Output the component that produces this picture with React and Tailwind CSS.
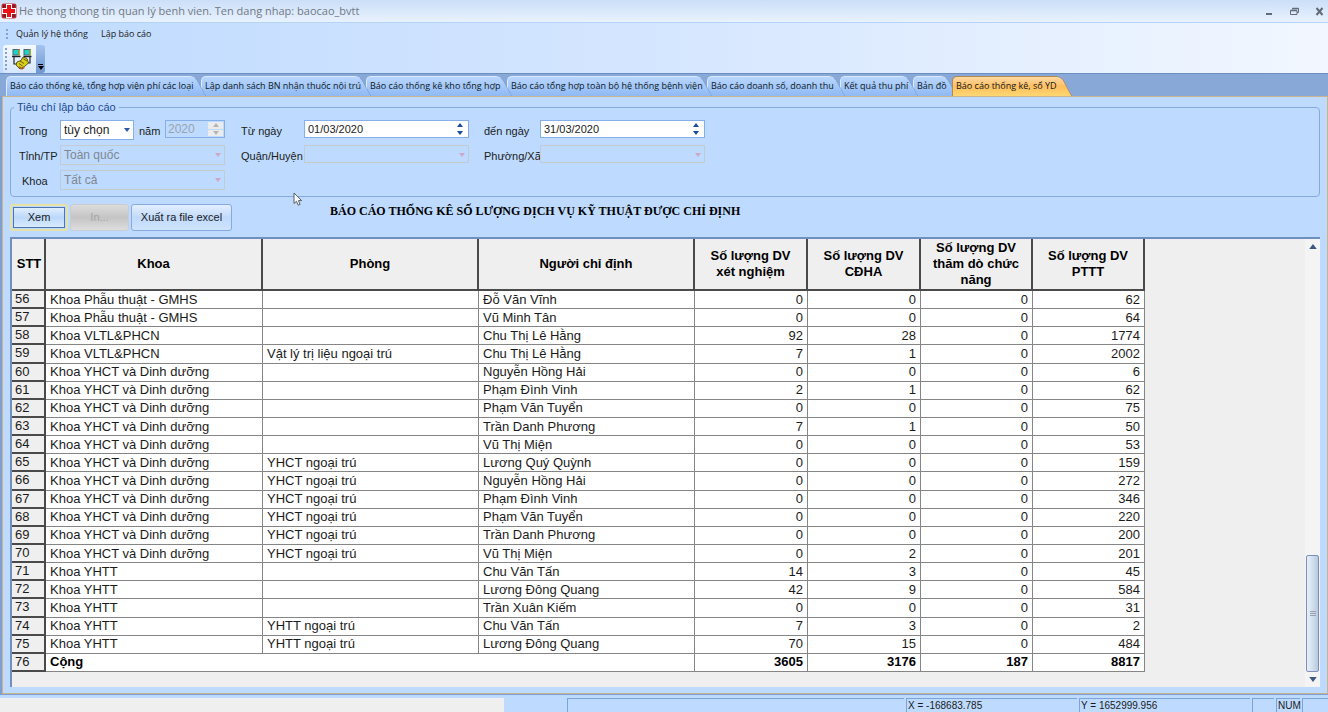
import { useState } from "react";

const TABS = [
  { label: "Báo cáo thống kê, tổng hợp viện phí các loại", width: "w-[195px]" },
  { label: "Lập danh sách BN nhận thuốc nội trú", width: "w-[165px]" },
  { label: "Báo cáo thống kê kho tổng hợp", width: "w-[141px]" },
  { label: "Báo cáo tổng hợp toàn bộ hệ thống bệnh viện", width: "w-[200px]" },
  { label: "Báo cáo doanh số, doanh thu", width: "w-[133px]" },
  { label: "Kết quả thu phí", width: "w-[73px]" },
  { label: "Bản đồ", width: "w-[39px]" },
  { label: "Báo cáo thống kê, sổ YD", width: "w-[115px]" },
];

const YHCT = "Khoa YHCT và Dinh dưỡng";
const ROWS = [
  [56, "Khoa Phẫu thuật - GMHS", "", "Đỗ Văn Vĩnh", 0, 0, 0, 62],
  [57, "Khoa Phẫu thuật - GMHS", "", "Vũ Minh Tân", 0, 0, 0, 64],
  [58, "Khoa VLTL&PHCN", "", "Chu Thị Lê Hằng", 92, 28, 0, 1774],
  [59, "Khoa VLTL&PHCN", "Vật lý trị liệu ngoại trú", "Chu Thị Lê Hằng", 7, 1, 0, 2002],
  [60, YHCT, "", "Nguyễn Hồng Hải", 0, 0, 0, 6],
  [61, YHCT, "", "Phạm Đình Vinh", 2, 1, 0, 62],
  [62, YHCT, "", "Phạm Văn Tuyển", 0, 0, 0, 75],
  [63, YHCT, "", "Trần Danh Phương", 7, 1, 0, 50],
  [64, YHCT, "", "Vũ Thị Miện", 0, 0, 0, 53],
  [65, YHCT, "YHCT ngoại trú", "Lương Quý Quỳnh", 0, 0, 0, 159],
  [66, YHCT, "YHCT ngoại trú", "Nguyễn Hồng Hải", 0, 0, 0, 272],
  [67, YHCT, "YHCT ngoại trú", "Phạm Đình Vinh", 0, 0, 0, 346],
  [68, YHCT, "YHCT ngoại trú", "Phạm Văn Tuyển", 0, 0, 0, 220],
  [69, YHCT, "YHCT ngoại trú", "Trần Danh Phương", 0, 0, 0, 200],
  [70, YHCT, "YHCT ngoại trú", "Vũ Thị Miện", 0, 2, 0, 201],
  [71, "Khoa YHTT", "", "Chu Văn Tấn", 14, 3, 0, 45],
  [72, "Khoa YHTT", "", "Lương Đông Quang", 42, 9, 0, 584],
  [73, "Khoa YHTT", "", "Trần Xuân Kiếm", 0, 0, 0, 31],
  [74, "Khoa YHTT", "YHTT ngoại trú", "Chu Văn Tấn", 7, 3, 0, 2],
  [75, "Khoa YHTT", "YHTT ngoại trú", "Lương Đông Quang", 70, 15, 0, 484],
];

const HEADERS = [
  "STT",
  "Khoa",
  "Phòng",
  "Người chỉ định",
  "Số lượng DV xét nghiệm",
  "Số lượng DV CĐHA",
  "Số lượng DV thăm dò chức năng",
  "Số lượng DV PTTT",
];

function AppIcon() {
  return (
    <svg width="16" height="16" viewBox="0 0 16 16" className="shrink-0" aria-hidden="true">
      <rect x=".5" y=".5" width="15" height="15" rx="2" fill="#d23a3f" />
      <path d="M1.500 1.500h4v4h-4zM10.500 1.500h4v4h-4zM1.500 10.500h4v4h-4zM10.500 10.500h4v4h-4z" fill="#8d1a20" />
      <path d="M5 1h6v4h4v6h-4v4H5v-4H1V5h4z" fill="#fff" />
      <path d="M6 2h4v4h4v4h-4v4H6v-4H2V6h4z" fill="#f01018" />
    </svg>
  );
}

function NetworkIcon() {
  return (
    <svg width="22" height="22" viewBox="0 0 22 22" aria-hidden="true">
      <path d="M3 8.500v7.500h4M19 8.500v6.500h-3" fill="none" stroke="#20262e" strokeWidth="1.200" />
      <rect x="1.500" y="1" width="7.500" height="6.500" fill="#55636b" />
      <rect x="2.500" y="2" width="4.500" height="4.500" fill="#19d3cf" />
      <rect x="7.500" y="1.500" width="1.200" height="6.500" fill="#c6cf28" />
      <path d="M1 8.500h8.500" stroke="#1b1f25" strokeWidth="1.400" />
      <rect x="12.500" y="1" width="7.500" height="6.500" fill="#55636b" />
      <rect x="13.500" y="2" width="4.500" height="4.500" fill="#19d3cf" />
      <rect x="18.500" y="1.500" width="1.200" height="6.500" fill="#c6cf28" />
      <path d="M12.500 8.500h8" stroke="#1b1f25" strokeWidth="1.400" />
      <path d="M6 14l4-1.500 2-3.500 4 1.500 1.500 4.500-4 3.500-4.500 2.500-4-4z" fill="#d9cf16" stroke="#3b3708" strokeWidth=".8" />
      <path d="M9 13l4 2.500M8 15.500l3.500 2.500M12.500 11l3.500 2" stroke="#5c5608" strokeWidth=".9" />
      <path d="M8 18.500l3 2.500 2.500-1.500" fill="none" stroke="#b5541b" strokeWidth="1.200" />
    </svg>
  );
}

function Arrow({ up = false, className = "" }) {
  return (
    <svg width="6" height="4" viewBox="0 0 6 4" className={className} aria-hidden="true">
      <path d={up ? "M0 4L3 0L6 4z" : "M0 0L3 4L6 0z"} fill="currentColor" />
    </svg>
  );
}

function Grip({ className }) {
  return (
    <span
      className={
        "block w-[2px] bg-[repeating-linear-gradient(to_bottom,#7fa3d8_0px,#7fa3d8_2px,transparent_2px,transparent_4px)] " +
        className
      }
    />
  );
}

function Combo({ id, value, options, disabled = false, className = "" }) {
  const look = disabled
    ? "border-[#c3cad2] bg-[#bedbff] text-[#808790]"
    : "border-[#86aee8] bg-white text-[#222]";
  return (
    <div className={"relative " + className}>
      <select
        id={id}
        defaultValue={value}
        disabled={disabled}
        className={"block h-full w-full appearance-none border pl-[3px] text-[12px] leading-[18px] opacity-100 " + look}
      >
        {options.map((o) => (
          <option key={o}>{o}</option>
        ))}
      </select>
      <Arrow className={"pointer-events-none absolute top-[8px] right-[4px] " + (disabled ? "text-[#cfa7c4]" : "text-[#2c57a8]")} />
    </div>
  );
}

function DateBox({ id, value }) {
  return (
    <div className="flex h-[18px] items-center border border-[#86aee8] bg-white pr-[5px]">
      <input id={id} type="text" defaultValue={value} className="min-w-0 flex-1 bg-transparent pl-[3px] text-[11px] leading-4 text-[#222] outline-none" />
      <div className="flex flex-col gap-1 text-[#1c4a9c]">
        <button type="button" aria-label="Tăng" className="block"><Arrow up className="block" /></button>
        <button type="button" aria-label="Giảm" className="block"><Arrow className="block" /></button>
      </div>
    </div>
  );
}

function Field({ htmlFor, className, children }) {
  return (
    <label htmlFor={htmlFor} className={"h-[20px] whitespace-nowrap text-[11px] leading-[23px] text-[#1b1b1b] " + className}>
      {children}
    </label>
  );
}

function Tab({ label, width, active, depth, onSelect }) {
  const body = active
    ? "border-[#b08a50] from-[#ffd9a3] via-[#ffbe5f] to-[#ffd873]"
    : "border-[#dbe9fc] from-[#b9d6fd] via-[#a3c8fa] to-[#8fb9f3]";
  const slant = active ? "border-r-[#b08a50]" : "border-r-[#7d9fd2]";
  return (
    <button
      type="button"
      role="tab"
      aria-selected={active}
      onClick={onSelect}
      style={{ zIndex: depth }}
      className={
        "relative isolate h-[20px] shrink-0 pl-[4px] text-left font-['Open_Sans','Noto_Sans',sans-serif] text-[9px] leading-[20px] whitespace-nowrap text-[#101820] " +
        width
      }
    >
      <span className={"absolute inset-y-0 right-[12px] left-0 -z-10 rounded-tl-[5px] border-t border-l bg-linear-to-b " + body} />
      <span className={"absolute inset-y-0 right-0 -z-10 w-[20px] skew-x-[28deg] rounded-tr-[6px] border-t border-r bg-linear-to-b " + body + " " + slant} />
      {label}
    </button>
  );
}

const cell = "border-r border-b border-[#858585] px-[4px] py-0";
const rowHead = "border-r-2 border-b-2 border-[#4a4a4a] bg-[#efefef] py-0 pl-[3px] text-left font-normal text-[#1b1b1b]";
const statusBox = "border-t border-l border-[#7ba3dc] pl-px";

export default function App() {
  const [tab, setTab] = useState(7);
  return (
    <div className="flex min-h-screen flex-col overflow-hidden bg-[#bedbff] font-['Liberation_Sans',Arial,sans-serif] text-[#1b1b1b]">
      <header className="flex h-[23px] items-center border-b border-[#b3d3fa] bg-linear-to-b from-[#cbdff8] to-[#e9f2fe] pl-px">
        <AppIcon />
        <h1 className="ml-[2px] flex-1 font-['Open_Sans','Noto_Sans',sans-serif] text-[11px] leading-5 text-[#707983]">
          He thong thong tin quan lý benh vien. Ten dang nhap: baocao_bvtt
        </h1>
        <div className="flex items-center gap-4 pr-[4px] text-[#636b77]">
          <button type="button" aria-label="Thu nhỏ">
            <svg width="9" height="9" viewBox="0 0 9 9" className="block"><path d="M1 7h6" stroke="currentColor" strokeWidth="2" /></svg>
          </button>
          <button type="button" aria-label="Khôi phục">
            <svg width="9" height="9" viewBox="0 0 9 9" className="block"><path d="M2.500 2.500V1.500h6v4h-1.500M.5 3.500h6.500v4H.5z" fill="none" stroke="currentColor" /><path d="M.5 3.500h6.500M2.500 1.500h6" stroke="currentColor" strokeWidth="1.500" /></svg>
          </button>
          <button type="button" aria-label="Đóng">
            <svg width="9" height="9" viewBox="0 0 9 9" className="block"><path d="M1.500 1l6 7M7.500 1l-6 7" stroke="currentColor" strokeWidth="2" /></svg>
          </button>
        </div>
      </header>

      <div className="border-b border-[#6d8fc0] bg-linear-to-r from-[#bfdbff] via-[#d5e6ff] to-[#f2f7ff]">
        <nav className="flex h-[22px] items-center pl-[6px] font-['Open_Sans','Noto_Sans',sans-serif] text-[9px]">
          <Grip className="h-[10px]" />
          <button type="button" className="ml-[8px]">Quản lý hệ thống</button>
          <button type="button" className="ml-[13px]">Lập báo cáo</button>
        </nav>
        <div className="flex h-[28px] pl-[3px]">
          <div className="flex w-[33px] items-center rounded-l-[3px] bg-linear-to-b from-[#f4f9ff] to-[#d6e7fe] pl-[2px]">
            <Grip className="h-[22px]" />
            <button type="button" aria-label="Kết nối" className="ml-[4px]"><NetworkIcon /></button>
          </div>
          <button type="button" aria-label="Tùy chọn thanh công cụ" className="flex w-[9px] flex-col items-center justify-end gap-px rounded-r-[3px] bg-linear-to-b from-[#a4c3ee] to-[#6f97d0] pb-[3px] text-black">
            <span className="h-px w-[5px] bg-black" />
            <Arrow className="block" />
          </button>
        </div>
      </div>

      <div role="tablist" className="isolate flex h-[22px] items-end overflow-hidden bg-[#88a9d7] pl-[6px]">
        {TABS.map((t, i) => (
          <Tab key={t.label} {...t} active={i === tab} depth={i === tab ? 20 : TABS.length - i} onSelect={() => setTab(i)} />
        ))}
      </div>

      <main className="flex flex-1 flex-col border-l-2 border-[#7f9fce]">
        <div className="relative flex flex-1 flex-col border border-[#c9b48c] pt-[3px] pr-[7px] pb-[6px] pl-[7px]">
          <fieldset className="rounded-[4px] border border-[#86aadf] pb-[6px]">
            <legend className="ml-[3px] px-[3px] text-[11px] leading-[14px] text-[#1d4a94]">Tiêu chí lập báo cáo</legend>
            <div className="mt-[6px] grid grid-cols-[49px_165px_79px_165px_71px_165px] gap-y-[5px]">
              <Field htmlFor="period" className="pl-[8px]">Trong</Field>
              <div className="flex h-[20px]">
                <Combo id="period" value="tùy chọn" options={["tùy chọn", "tháng", "quý", "năm"]} className="h-[20px] w-[74px]" />
                <Field htmlFor="year" className="w-[31px] pl-[5px]">năm</Field>
                <div className="flex h-[18px] flex-1 border border-[#86aee8] bg-[#bedbff]">
                  <input id="year" type="text" defaultValue="2020" disabled className="w-0 flex-1 pl-[2px] text-[12px] leading-4 text-[#98a3b0]" />
                  <div className="flex w-[16px] flex-col gap-px py-px pr-px text-[#b4b4b4]">
                    <button type="button" disabled aria-label="Tăng năm" className="flex flex-1 items-center justify-center bg-[#ececec]"><Arrow up /></button>
                    <button type="button" disabled aria-label="Giảm năm" className="flex flex-1 items-center justify-center bg-[#ececec]"><Arrow /></button>
                  </div>
                </div>
              </div>
              <Field htmlFor="from" className="pl-[16px]">Từ ngày</Field>
              <DateBox id="from" value="01/03/2020" />
              <Field htmlFor="to" className="pl-[15px]">đến ngày</Field>
              <DateBox id="to" value="31/03/2020" />

              <Field htmlFor="province" className="pl-[8px]">Tỉnh/TP</Field>
              <Combo id="province" value="Toàn quốc" options={["Toàn quốc"]} disabled className="h-[20px]" />
              <Field htmlFor="district" className="pl-[16px]">Quận/Huyện</Field>
              <Combo id="district" value="" options={[""]} disabled className="h-[18px]" />
              <Field htmlFor="ward" className="pl-[15px]">Phường/Xã</Field>
              <Combo id="ward" value="" options={[""]} disabled className="h-[18px]" />

              <Field htmlFor="dept" className="pl-[11px]">Khoa</Field>
              <Combo id="dept" value="Tất cả" options={["Tất cả"]} disabled className="h-[20px]" />
            </div>
          </fieldset>

          <svg width="10" height="15" viewBox="0 0 10 15" className="pointer-events-none absolute top-[95px] left-[290px]" aria-hidden="true">
            <path d="M1 1v10.500l2.500-2.200 1.700 3.900 1.900-.8-1.700-3.800h3.300z" fill="#fff" stroke="#4a4f58" strokeWidth=".9" />
          </svg>

          <div className="flex h-[40px] gap-[2px] pt-[7px] text-[11px]">
            <button type="button" className="h-[27px] w-[58px] rounded-[3px] border-2 border-[#e6e2a6] p-px">
              <span className="flex h-full items-center justify-center border border-[#4f74b0] bg-linear-to-b from-[#e1eefe] via-[#bcd8fb] to-[#d8ebfe]">Xem</span>
            </button>
            <button type="button" disabled className="h-[27px] w-[59px] rounded-[3px] border border-[#c9cdd3] bg-linear-to-b from-[#dcdcdc] via-[#c4c4c4] to-[#dedede] text-[#a5a5a5]">In...</button>
            <button type="button" className="h-[27px] w-[101px] rounded-[3px] border border-[#86aadf] bg-linear-to-b from-[#e4effe] via-[#c0dafb] to-[#cfe4fe]">Xuất ra file excel</button>
            <h2 className="ml-[96px] font-['Liberation_Serif','Times_New_Roman',serif] text-[12px] leading-[15px] font-bold text-black">
              BÁO CÁO THỐNG KÊ SỐ LƯỢNG DỊCH VỤ KỸ THUẬT ĐƯỢC CHỈ ĐỊNH
            </h2>
          </div>

          <div className="flex flex-1 border-t-2 border-l-2 border-[#6f8fbf] bg-[#efefef]">
            <div className="flex-1">
              <table className="h-[433px] w-[1133px] table-fixed border-separate border-spacing-0 text-[13px] leading-[16px]">
                <colgroup>
                  <col className="w-[34px]" />
                  <col className="w-[217px]" />
                  <col className="w-[216px]" />
                  <col className="w-[216px]" />
                  <col className="w-[113px]" />
                  <col className="w-[113px]" />
                  <col className="w-[112px]" />
                  <col className="w-[112px]" />
                </colgroup>
                <thead>
                  <tr className="h-[52px]">
                    {HEADERS.map((h, i) => (
                      <th key={h} scope="col" className={"border-r-2 border-b-2 border-[#4a4a4a] bg-[#efefef] py-0 align-middle font-bold text-black " + (i === 0 ? "pl-[2px]" : "px-[10px]")}>
                        {h}
                      </th>
                    ))}
                  </tr>
                </thead>
                <tbody>
                  {ROWS.map((r) => (
                    <tr key={r[0]}>
                      <th scope="row" className={rowHead}>{r[0]}</th>
                      {r.slice(1).map((v, i) => (
                        <td key={i} className={cell + " bg-white " + (i > 2 ? "text-right" : "text-left")}>{v}</td>
                      ))}
                    </tr>
                  ))}
                  <tr className="font-bold text-black">
                    <th scope="row" className={rowHead}>76</th>
                    <td colSpan={3} className={cell + " bg-white"}>Cộng</td>
                    <td className={cell + " bg-white text-right"}>3605</td>
                    <td className={cell + " bg-white text-right"}>3176</td>
                    <td className={cell + " bg-white text-right"}>187</td>
                    <td className={cell + " bg-white text-right"}>8817</td>
                  </tr>
                </tbody>
              </table>
            </div>
            <div className="flex w-[15px] flex-col items-center bg-[#f4f4f4] py-[5px] text-[#3f5583]">
              <button type="button" aria-label="Cuộn lên"><Arrow up className="block h-[5px] w-[8px]" /></button>
              <div className="flex-1" />
              <div className="flex h-[117px] w-[13px] flex-col items-center justify-center gap-px rounded-[2px] border border-[#7d8fb8] bg-linear-to-r from-[#e8eff9] via-[#d3dfef] to-[#b7c8df]">
                <span className="h-px w-[6px] bg-[#98a0ae]" />
                <span className="h-px w-[6px] bg-[#98a0ae]" />
                <span className="h-px w-[6px] bg-[#98a0ae]" />
              </div>
              <button type="button" aria-label="Cuộn xuống" className="mt-[5px]"><Arrow className="block h-[5px] w-[8px]" /></button>
            </div>
          </div>
        </div>
      </main>

      <footer className="flex h-[18px] gap-[2px] border-t border-[#7f9fce] bg-[#bedbff] pt-[3px] text-[10px] leading-[14px]">
        <div className="w-[504px] bg-[#efefef]" />
        <div className="w-[59px]" />
        <div className={"flex-1 " + statusBox} />
        <div className={"w-[171px] " + statusBox}>X = -168683.785</div>
        <div className={"w-[171px] " + statusBox}>Y = 1652999.956</div>
        <div className={"w-[22px] " + statusBox} />
        <div className={"w-[24px] " + statusBox}>NUM</div>
        <div className={"w-[26px] " + statusBox} />
      </footer>
    </div>
  );
}
